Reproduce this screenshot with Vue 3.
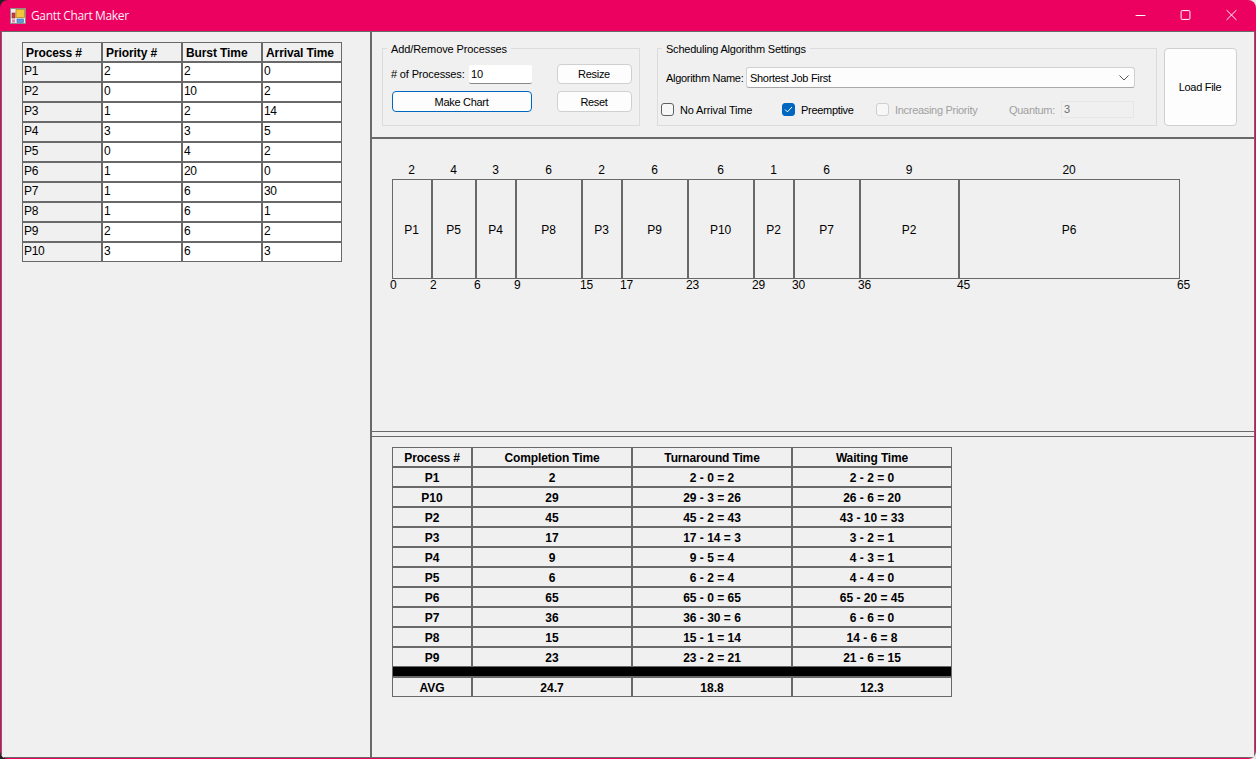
<template>
  <div class="window">
    <!-- Title bar -->
    <header class="titlebar">
      <svg class="app-icon" width="16" height="16" viewBox="0 0 16 16">
        <rect x="0.5" y="0.5" width="15" height="15" fill="#f4e9ee" stroke="#8c8c8c" />
        <rect x="6" y="1.5" width="8.5" height="8" fill="#f2c53a" stroke="#b8862a" stroke-width="0.8" />
        <rect x="2" y="5" width="3" height="5" fill="#d23a34" stroke="#8e2b2b" stroke-width="0.6" />
        <rect x="7" y="11" width="6.5" height="3.5" fill="#5b9bdc" stroke="#3a6ea8" stroke-width="0.6" />
        <rect x="2" y="11.5" width="3" height="3" fill="#d98aa0" />
      </svg>
      <span class="title">Gantt Chart Maker</span>
      <div class="window-btns">
        <svg width="46" height="31" viewBox="0 0 46 31"><path d="M17 15.5h10" stroke="#fff" fill="none" /></svg>
        <svg width="46" height="31" viewBox="0 0 46 31"><rect x="17.5" y="10.5" width="9" height="9" rx="1" stroke="#fff" fill="none" /></svg>
        <svg width="46" height="31" viewBox="0 0 46 31"><path d="M18 10l10 10M28 10l-10 10" stroke="#fff" fill="none" /></svg>
      </div>
    </header>

    <div class="client">
      <!-- Process input grid -->
      <aside class="left-pane">
        <div class="grid process-grid">
          <div v-for="h in processHeaders" :key="h" class="cell head">{{ h }}</div>
          <template v-for="p in processes" :key="p.name">
            <div class="cell name">{{ p.name }}</div>
            <div class="cell edit">{{ p.priority }}</div>
            <div class="cell edit">{{ p.burst }}</div>
            <div class="cell edit">{{ p.arrival }}</div>
          </template>
        </div>
      </aside>

      <main class="right-pane">
        <!-- Settings -->
        <section class="settings">
          <div class="group group-processes">
            <span class="legend">Add/Remove Processes</span>
            <div class="count-row">
              <label>#&nbsp;of Processes:</label>
              <input class="textbox" value="10" readonly />
            </div>
            <button type="button" class="btn">Resize</button>
            <button type="button" class="btn primary">Make Chart</button>
            <button type="button" class="btn">Reset</button>
          </div>

          <div class="group group-algorithm">
            <span class="legend">Scheduling Algorithm Settings</span>
            <div class="algo-row">
              <label>Algorithm Name:</label>
              <div class="combo">
                <span>Shortest Job First</span>
                <svg width="10" height="6" viewBox="0 0 10 6"><path d="M0.5 0.5L5 5l4.5-4.5" stroke="#555" fill="none" /></svg>
              </div>
            </div>
            <div class="options-row">
              <div class="check no-arrival"><span class="box"></span>No Arrival Time</div>
              <div class="check">
                <span class="box checked">
                  <svg width="9" height="7" viewBox="0 0 9 7"><path d="M1 3.5l2.4 2.4L8 1" stroke="#fff" fill="none" /></svg>
                </span>
                Preemptive
              </div>
              <div class="check disabled"><span class="box"></span>Increasing Priority</div>
              <span class="disabled quantum-label">Quantum:</span>
              <div class="quantum">3</div>
            </div>
          </div>

          <button type="button" class="btn load">Load File</button>
        </section>

        <!-- Gantt chart -->
        <section class="chart">
          <div class="timeline">
            <div v-for="s in segments" :key="s.start" class="segment" :style="{ width: s.width + 'px' }">
              <span class="burst">{{ s.burst }}</span>
              <div class="bar">{{ s.name }}</div>
              <span class="tick">{{ s.start }}</span>
            </div>
            <div class="segment end">
              <span class="burst"></span>
              <div class="bar-spacer"></div>
              <span class="tick">{{ totalTime }}</span>
            </div>
          </div>
        </section>

        <!-- Results -->
        <section class="results">
          <div class="grid results-grid">
            <div v-for="h in resultHeaders" :key="h" class="cell result-head">{{ h }}</div>
            <template v-for="r in results" :key="r[0]">
              <div v-for="(v, i) in r" :key="i" class="cell">{{ v }}</div>
            </template>
            <div class="black-row"></div>
            <div v-for="v in averages" :key="v" class="cell">{{ v }}</div>
          </div>
        </section>
      </main>
    </div>
  </div>
</template>

<script setup>
const processHeaders = ['Process #', 'Priority #', 'Burst Time', 'Arrival Time']

const processes = [
  { name: 'P1', priority: 2, burst: 2, arrival: 0 },
  { name: 'P2', priority: 0, burst: 10, arrival: 2 },
  { name: 'P3', priority: 1, burst: 2, arrival: 14 },
  { name: 'P4', priority: 3, burst: 3, arrival: 5 },
  { name: 'P5', priority: 0, burst: 4, arrival: 2 },
  { name: 'P6', priority: 1, burst: 20, arrival: 0 },
  { name: 'P7', priority: 1, burst: 6, arrival: 30 },
  { name: 'P8', priority: 1, burst: 6, arrival: 1 },
  { name: 'P9', priority: 2, burst: 6, arrival: 2 },
  { name: 'P10', priority: 3, burst: 6, arrival: 3 }
]

// Execution order, width of a bar is 11px per time unit with a 40px minimum
const order = [
  ['P1', 2], ['P5', 4], ['P4', 3], ['P8', 6], ['P3', 2], ['P9', 6],
  ['P10', 6], ['P2', 1], ['P7', 6], ['P2', 9], ['P6', 20]
]

let clock = 0
const segments = order.map(([name, burst], i) => {
  const extra = i === order.length - 1 ? 1 : 0
  const seg = { name, burst, start: clock, width: Math.max(40, burst * 11) + extra }
  clock += burst
  return seg
})
const totalTime = clock

const resultHeaders = ['Process #', 'Completion Time', 'Turnaround Time', 'Waiting Time']

const results = [
  ['P1', '2', '2 - 0 = 2', '2 - 2 = 0'],
  ['P10', '29', '29 - 3 = 26', '26 - 6 = 20'],
  ['P2', '45', '45 - 2 = 43', '43 - 10 = 33'],
  ['P3', '17', '17 - 14 = 3', '3 - 2 = 1'],
  ['P4', '9', '9 - 5 = 4', '4 - 3 = 1'],
  ['P5', '6', '6 - 2 = 4', '4 - 4 = 0'],
  ['P6', '65', '65 - 0 = 65', '65 - 20 = 45'],
  ['P7', '36', '36 - 30 = 6', '6 - 6 = 0'],
  ['P8', '15', '15 - 1 = 14', '14 - 6 = 8'],
  ['P9', '23', '23 - 2 = 21', '21 - 6 = 15']
]

const averages = ['AVG', '24.7', '18.8', '12.3']
</script>

<style>
html,
body {
  margin: 0;
  background: linear-gradient(90deg, #222 50%, #e6e6e6 50%);
}
</style>

<style scoped>
.window {
  width: 1256px;
  height: 759px;
  box-sizing: border-box;
  display: flex;
  flex-direction: column;
  padding: 0 1px 1px;
  background: #ec0060;
  border-radius: 8px;
  overflow: hidden;
  font-family: "Liberation Sans", Arial, sans-serif;
  font-size: 11px;
  color: #000;
}

.titlebar {
  height: 31px;
  flex: none;
  display: flex;
  align-items: center;
  padding-left: 9px;
}

.app-icon {
  flex: none;
}

.title {
  margin-left: 5px;
  color: #ffeef5;
  font-family: "Open Sans", sans-serif;
  font-size: 12px;
  letter-spacing: -0.35px;
}

.window-btns {
  margin-left: auto;
  margin-right: 1px;
  display: flex;
  width: 135px;
  justify-content: space-between;
}

.window-btns svg {
  display: block;
}

.client {
  flex: 1;
  min-height: 0;
  display: flex;
  border: 1px solid #696969;
  background: #f0f0f0;
}

.left-pane {
  width: 348px;
  flex: none;
  padding: 10px 0 0 20px;
  border-right: 2px solid #696969;
}

.right-pane {
  flex: 1;
  min-width: 0;
  display: flex;
  flex-direction: column;
}

/* data grids: 1px outer line, 2px between cells */
.grid {
  display: grid;
  gap: 2px;
  padding: 1px;
  background: #696969;
  width: max-content;
}

.process-grid {
  grid-template-columns: repeat(4, 78px);
  grid-auto-rows: 18px;
}

.results-grid {
  grid-template-columns: 78px repeat(3, 158px);
  grid-template-rows: repeat(11, 18px) 8px 18px;
  font-weight: bold;
  font-size: 12px;
  text-align: center;
}

.cell {
  background: #f0f0f0;
  line-height: 20px;
  white-space: nowrap;
  overflow: hidden;
}

.result-head {
  letter-spacing: -0.15px;
}

.process-grid .cell {
  font-size: 12px;
}

.head {
  font-weight: bold;
  padding-left: 3px;
  letter-spacing: -0.1px;
}

.name,
.edit {
  padding-left: 1px;
  letter-spacing: -0.3px;
  line-height: 17px;
}

.edit {
  background: #fff;
}

.black-row {
  grid-column: 1 / -1;
  height: 9px;
  margin-top: -1px;
  background: #000;
}

/* settings panel */
.settings {
  height: 107px;
  flex: none;
  box-sizing: border-box;
  display: flex;
  align-items: flex-start;
  padding: 16px 0 0 10px;
  border-bottom: 2px solid #696969;
  letter-spacing: -0.3px;
}

.group {
  position: relative;
  box-sizing: border-box;
  height: 78px;
  border: 1px solid #dcdcdc;
}

.legend {
  position: absolute;
  top: -6px;
  left: 4px;
  padding: 0 4px;
  background: #f0f0f0;
  line-height: 13px;
  white-space: nowrap;
  letter-spacing: -0.22px;
}

.group-processes {
  width: 258px;
  display: grid;
  grid-template-columns: 140px 75px;
  grid-template-rows: 20px 21px;
  column-gap: 25px;
  row-gap: 7px;
  padding: 15px 0 0 9px;
}

.group-processes .legend {
  letter-spacing: -0.1px;
}

.count-row {
  display: flex;
  align-items: center;
  justify-content: space-between;
  margin-left: -1px;
  letter-spacing: -0.15px;
}

.textbox {
  width: 63px;
  height: 19px;
  box-sizing: border-box;
  padding: 0 2px;
  margin-top: 1px;
  border: none;
  border-bottom: 1px solid #8a8a8a;
  border-radius: 2px;
  outline: none;
  background: #fff;
  font: inherit;
}

.btn {
  box-sizing: border-box;
  padding: 0 1px 0 0;
  background: #fdfdfd;
  border: 1px solid #d0d0d0;
  border-radius: 4px;
  font: inherit;
  letter-spacing: inherit;
  color: #000;
}

.btn.primary {
  border-color: #0067c0;
}

.group-algorithm {
  width: 500px;
  margin-left: 17px;
  padding: 18px 0 0 8px;
}

.algo-row {
  display: flex;
  align-items: center;
  height: 21px;
}

.algo-row label {
  width: 80px;
  flex: none;
  white-space: nowrap;
}

.combo {
  width: 389px;
  height: 21px;
  box-sizing: border-box;
  display: flex;
  align-items: center;
  justify-content: space-between;
  padding: 0 5px 0 3px;
  background: #fdfdfd;
  border: 1px solid #d0d0d0;
  border-bottom-color: #a8a8a8;
  border-radius: 3px;
}

.options-row {
  display: grid;
  grid-template-columns: 121px 94px 133px 52px 73px;
  align-items: center;
  height: 17px;
  margin: 13px 0 0 -5px;
  white-space: nowrap;
}

.check {
  display: flex;
  align-items: center;
}

.no-arrival {
  letter-spacing: -0.15px;
}

.box {
  width: 13px;
  height: 13px;
  flex: none;
  box-sizing: border-box;
  display: flex;
  align-items: center;
  justify-content: center;
  margin-right: 6px;
  background: #f7f7f7;
  border: 1px solid #606060;
  border-radius: 3px;
}

.box.checked {
  background: #0067c0;
  border-color: #0067c0;
}

.disabled {
  color: #a0a0a0;
}

.disabled .box {
  border-color: #cfcfcf;
}

.quantum {
  height: 17px;
  box-sizing: border-box;
  padding-left: 2px;
  line-height: 15px;
  background: #f0f0f0;
  border: 1px solid #e6e6e6;
  color: #6d6d6d;
}

.load {
  width: 73px;
  height: 78px;
  margin-left: 7px;
}

/* gantt chart */
.chart {
  height: 293px;
  flex: none;
  box-sizing: border-box;
  padding: 24px 0 0 20px;
  border-bottom: 1px solid #696969;
}

.timeline {
  display: flex;
}

.segment {
  flex: none;
  display: flex;
  flex-direction: column;
  text-align: center;
  font-size: 12px;
  letter-spacing: -0.2px;
}

.segment.end {
  width: 0;
}

.segment.end .tick {
  margin-left: -3px;
}

.burst {
  height: 14px;
  line-height: 14px;
  margin-bottom: 2px;
  padding-right: 1px;
}

.bar {
  height: 100px;
  box-sizing: border-box;
  padding-right: 1px;
  line-height: 100px;
  border: 1px solid #696969;
}

.bar-spacer {
  height: 100px;
}

.tick {
  margin: -1px 0 0 -2px;
  line-height: 14px;
  text-align: left;
  white-space: nowrap;
}

/* results table */
.results {
  flex: 1;
  margin-top: 4px;
  padding: 10px 0 0 20px;
  border-top: 1px solid #696969;
}
</style>
